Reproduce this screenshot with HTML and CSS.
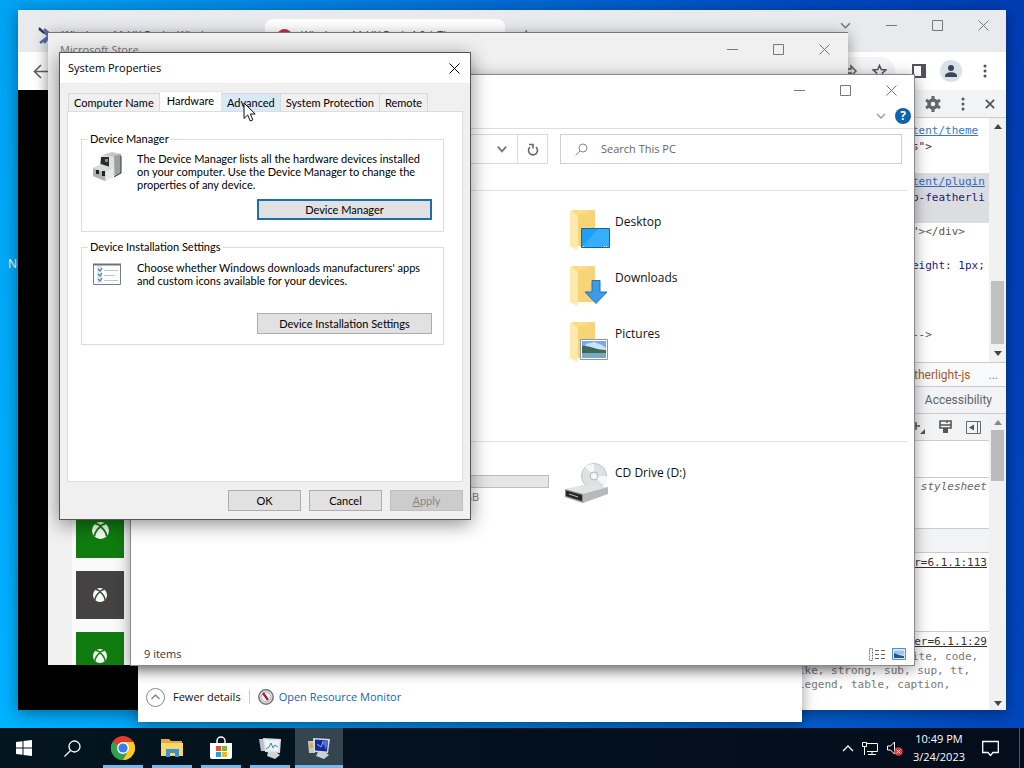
FILE: index.html
```html
<!DOCTYPE html>
<html lang="en">
<head>
<meta charset="utf-8">
<title>Desktop</title>
<link rel="stylesheet" href="styles.css">
</head>
<body>
<svg class="defs" aria-hidden="true">
  <symbol id="min" viewBox="0 0 11 11"><path d="M0 5.5h11" stroke="currentColor"/></symbol>
  <symbol id="max" viewBox="0 0 11 11"><path d="M.5.5h10v10H.5z" fill="none" stroke="currentColor"/></symbol>
  <symbol id="close" viewBox="0 0 11 11"><path d="M.5.5l10 10M10.5.5l-10 10" stroke="currentColor"/></symbol>
  <symbol id="down" viewBox="0 0 10 10"><path d="M1 3l4 4 4-4" fill="none" stroke="currentColor" stroke-width="1.4"/></symbol>
  <symbol id="dots" viewBox="0 0 4 14"><g fill="currentColor"><circle cx="2" cy="2" r="1.5"/><circle cx="2" cy="7" r="1.5"/><circle cx="2" cy="12" r="1.5"/></g></symbol>
  <symbol id="xbox" viewBox="0 0 16 16"><circle cx="8" cy="8" r="8" fill="#f4fff4"/><path d="M3 1.8C5 1.5 6.500 2.600 8 3.700 9.500 2.600 11 1.500 13 1.800M8 4.500C5 6.500 2.800 9.500 2.200 13.500M8 4.500c3 2 5.200 5 5.800 9" fill="none" stroke="var(--tile)" stroke-width="1.700"/></symbol>
  <symbol id="folder" viewBox="0 0 40 42">
    <path d="M2 1h23v36H7z" fill="#fbdb85"/><path d="M8 6l17-5v36H8z" fill="#f9d477"/><path d="M0 1l8 6v30l-1 4-7-4z" fill="#fee9ad"/>
  </symbol>
</svg>
<main class="desktop">
  <span class="shortcut">New</span>

  <section class="window chrome" aria-label="Browser">
    <header class="tabstrip">
      <svg class="tools" viewBox="0 0 14 18"><path d="M1 2l10 7L2 16M6 2l7 6-7 8" fill="none" stroke="#5470a8" stroke-width="2.500"/><path d="M1 1l5 5" stroke="#334" stroke-width="2"/></svg>
      <span class="tab">Windows 11 UX Pack - Windows</span>
      <span class="tab current"><i class="dot"></i>Windows 11 UX Pack 4.0 | The</span>
      <span class="plus">+</span>
      <div class="controls">
        <button aria-label="Search tabs"><svg><use href="#down"/></svg></button>
        <button aria-label="Minimize"><svg><use href="#min"/></svg></button>
        <button aria-label="Maximize"><svg><use href="#max"/></svg></button>
        <button aria-label="Close"><svg><use href="#close"/></svg></button>
      </div>
    </header>
    <div class="navbar">
      <button aria-label="Back"><svg width="15" height="15" viewBox="0 0 15 15"><path d="M15 7.500H2M8 1L1.500 7.500 8 14" fill="none" stroke="#5f6368" stroke-width="1.700"/></svg></button>
      <div class="omnibox">
        <svg width="14" height="14" viewBox="0 0 14 14"><path d="M1 5h6V2l5 5-5 5V9H1" fill="none" stroke="#5f6368" stroke-width="1.500"/></svg>
        <svg width="15" height="15" viewBox="0 0 15 15"><path d="M7.500 1.500l1.800 4.100 4.500.4-3.400 3 1 4.400-3.900-2.300-3.900 2.300 1-4.400-3.400-3 4.500-.4z" fill="none" stroke="#50545a" stroke-width="1.500"/></svg>
      </div>
      <button aria-label="Side panel"><svg width="14" height="14" viewBox="0 0 14 14"><path d="M1 1h12v12H1z" fill="none" stroke="#50545a" stroke-width="2"/><path d="M9 1h4v12H9z" fill="#50545a"/></svg></button>
      <button aria-label="Profile"><svg width="22" height="22" viewBox="0 0 22 22"><circle cx="11" cy="11" r="11" fill="#dbe1ea"/><circle cx="11" cy="8" r="3" fill="#3c4656"/><path d="M5 16c0-5 12-5 12 0v1H5z" fill="#3c4656"/></svg></button>
      <button aria-label="Menu"><svg width="4" height="14"><use href="#dots"/></svg></button>
    </div>
    <div class="viewport">
      <div class="page"></div>
      <aside class="devtools">
        <div class="dt-bar">
          <svg width="16" height="16" viewBox="0 0 16 16"><circle cx="8" cy="8" r="4" fill="none" stroke="#666" stroke-width="3.500"/><path d="M8 0v3M8 13v3M1 4l3 2M12 10l3 2M15 4l-3 2M4 10l-3 2" stroke="#666" stroke-width="3"/></svg>
          <svg width="4" height="14"><use href="#dots"/></svg>
          <svg width="10" height="10" viewBox="0 0 11 11"><path d="M1 1l9 9M10 1l-9 9" stroke="#555" stroke-width="2"/></svg>
        </div>
        <div class="dt-pane">
          <div class="code">
            <div class="chunk"><a href="#">tent/theme</a><br>s"&gt;</div>
            <div class="chunk picked"><a href="#">tent/plugin</a><br><b>p-featherli</b></div>
            <div class="chunk dim">"&gt;&lt;/div&gt;</div>
            <div class="chunk"><b>eight: 1px;</b></div>
            <div class="chunk last dim">--&gt;</div>
          </div>
          <div class="scroll low"><i class="up"></i><i class="thumb"></i><i class="dn"></i></div>
        </div>
        <div class="crumbs"><span>therlight-js</span><span class="more">...</span></div>
        <div class="dt-tabs">Accessibility</div>
        <div class="dt-pane">
          <div class="rules">
            <div class="rule-bar">
              <svg width="13" height="14" viewBox="0 0 13 14"><path d="M0 6h8M4 2v8" stroke="#555" stroke-width="1.500"/><path d="M13 9v5H8z" fill="#555"/></svg>
              <svg width="13" height="14" viewBox="0 0 13 14"><path d="M1 1h11v7H1zM1 5h11M8 1v2" fill="none" stroke="#555" stroke-width="1.600"/><path d="M4 8h5v5H4z" fill="#555"/></svg>
              <svg width="15" height="13" viewBox="0 0 15 13"><path d="M.5.5h14v12H.5zM11.500.5v12" fill="none" stroke="#666"/><path d="M8 3.500v6l-5-3z" fill="#555"/></svg>
            </div>
            <div class="rule blank"></div>
            <div class="rule sheet"><em>stylesheet</em></div>
            <div class="rule grey"></div>
            <div class="rule src">r=6.1.1:113</div>
            <div class="rule end"><div class="src2">er=6.1.1:29</div><div class="r1">ite, code,</div><div>ike, strong, sub, sup, tt,</div><div>legend, table, caption,</div></div>
          </div>
          <div class="scroll high"><i class="up pale"></i><i class="thumb"></i><i class="dn"></i></div>
        </div>
      </aside>
    </div>
  </section>

  <section class="window monitor" aria-label="Task Manager">
    <footer>
      <svg width="19" height="19" viewBox="0 0 19 19"><circle cx="9.500" cy="9.500" r="9" fill="#fff" stroke="#888"/><path d="M5.500 11l4-4 4 4" fill="none" stroke="#888" stroke-width="1.500"/></svg>
      <span>Fewer details</span><i class="bar"></i>
      <svg width="16" height="16" viewBox="0 0 16 16"><circle cx="8" cy="8" r="7.200" fill="#eef3f1" stroke="#77736f" stroke-width="1.500"/><circle cx="8" cy="8" r="5" fill="none" stroke="#9ab"/><path d="M5 4l5 7" stroke="#b3142f" stroke-width="2.200"/></svg>
      <a href="#">Open Resource Monitor</a>
    </footer>
  </section>

  <section class="window store" aria-label="Microsoft Store">
    <header class="titlebar"><span>Microsoft Store</span>
      <div class="controls">
        <button aria-label="Minimize"><svg><use href="#min"/></svg></button>
        <button aria-label="Maximize"><svg><use href="#max"/></svg></button>
        <button aria-label="Close"><svg><use href="#close"/></svg></button>
      </div>
    </header>
    <div class="tiles">
      <i class="tile"></i><i class="tile"></i><i class="tile"></i><i class="tile"></i><i class="tile"></i><i class="tile"></i><i class="tile"></i>
      <i class="tile raised"><svg width="17" height="17"><use href="#xbox"/></svg></i>
      <i class="tile dark"><svg width="14" height="14"><use href="#xbox"/></svg></i>
      <i class="tile"><svg width="14" height="14"><use href="#xbox"/></svg></i>
    </div>
  </section>

  <section class="window explorer" aria-label="This PC">
    <header class="titlebar">
      <div class="controls">
        <button aria-label="Minimize"><svg><use href="#min"/></svg></button>
        <button aria-label="Maximize"><svg><use href="#max"/></svg></button>
        <button aria-label="Close"><svg><use href="#close"/></svg></button>
      </div>
    </header>
    <div class="ribbon"><svg width="10" height="10"><use href="#down"/></svg><button class="help" aria-label="Help">?</button></div>
    <div class="address">
      <div class="path"><button aria-label="Previous locations"><svg width="12" height="12" viewBox="0 0 10 10"><path d="M1.500 3l3.500 4 3.500-4" fill="none" stroke="#777" stroke-width="1.500"/></svg></button><button aria-label="Refresh"><svg width="12" height="13" viewBox="0 0 12 13"><path d="M3 4a4.500 4.500 0 1 0 6 0M2 1.500h4v4" fill="none" stroke="#666" stroke-width="1.600"/></svg></button></div>
      <label class="search"><svg width="13" height="13" viewBox="0 0 13 13"><circle cx="8" cy="5" r="4" fill="none" stroke="#888"/><path d="M5 8l-4.500 4.500" stroke="#888"/></svg><input type="text" placeholder="Search This PC" aria-label="Search This PC"></label>
    </div>
    <div class="files">
      <ul class="group">
        <li><svg width="40" height="42" viewBox="0 0 40 42"><use href="#folder"/><path d="M11.500 19.500h28v19h-28z" fill="#1ea0f5" stroke="#15659f"/><path d="M12 38L28 20h11v18z" fill="#36aefa"/><path d="M13 37.500h2M34 37.500h4" stroke="#fff" stroke-dasharray="1"/></svg>Desktop</li>
        <li><svg width="40" height="42" viewBox="0 0 40 42"><use href="#folder"/><path d="M22 15.500h8V27h7L26 38.500 15 27h7z" fill="#3b9be8" stroke="#2273b5"/></svg>Downloads</li>
        <li><svg width="40" height="42" viewBox="0 0 40 42"><use href="#folder"/><path d="M10.500 18.500h27v20h-27z" fill="#fff" stroke="#8996a5"/><path d="M12 20h24v9H12z" fill="#75aaf0"/><path d="M16 23l8-2 8 3 4 3v3H12z" fill="#cce3ff"/><path d="M12 25c7-1 12 4 24 4v4H12z" fill="#3e6957"/><path d="M12 32h24v5H12z" fill="#7aa8bf"/></svg>Pictures</li>
      </ul>
      <div class="drives">
        <div class="disk"><i class="meter"></i><span>GB</span></div>
        <div class="cd"><svg width="43" height="41" viewBox="0 0 43 41"><circle cx="29" cy="13" r="12.500" fill="#dce1e1" stroke="#bfc5c5"/><path d="M29 13L20 4a13 13 0 0 1 9-3zM29 13l9 9a13 13 0 0 0 4-9z" fill="#f5f8f8"/><circle cx="29" cy="13" r="4" fill="#eef1f1" stroke="#b4baba"/><circle cx="29" cy="13" r="1.500" fill="#fff"/><path d="M0 26l18-4 25 2-24 8z" fill="#e3e4e4"/><path d="M18 31l25-7v7l-25 9z" fill="#b7babb"/><path d="M0 26l18 5v9L0 34z" fill="#8e9293"/><path d="M1 27.500l16 4.500v6L1 33z" fill="#222628"/><path d="M4 31l9 3" stroke="#bbb"/></svg><span>CD Drive (D:)</span></div>
      </div>
    </div>
    <footer class="status"><span>9 items</span>
      <div><svg width="18" height="13" viewBox="0 0 18 13"><path d="M1.500.5h3v12h-3z" fill="none" stroke="#777" stroke-dasharray="2 1"/><path d="M7 2.500h4M13 2.500h4M7 6.500h4M13 6.500h4M7 10.500h4M13 10.500h4" stroke="#666"/></svg>
      <svg width="14" height="12" viewBox="0 0 14 12"><path d="M.5.5h13v11H.5z" fill="#dbeeff" stroke="#4d91c4"/><path d="M2 2.500h10v4H2z" fill="#9bc5f0"/><path d="M2 5l5 2 5 1v2H2z" fill="#27548c"/></svg></div>
    </footer>
  </section>

  <section class="window dialog" role="dialog" aria-label="System Properties">
    <header class="titlebar"><span>System Properties</span><button class="x" aria-label="Close"><svg width="11" height="11"><use href="#close"/></svg></button></header>
    <div class="sheet-body">
      <div class="ptabs" role="tablist">
        <button role="tab">Computer Name</button><button role="tab" class="on" aria-selected="true">Hardware</button><button role="tab" class="hover">Advanced</button><button role="tab">System Protection</button><button role="tab">Remote</button>
      </div>
      <div class="panel">
        <fieldset>
          <legend>Device Manager</legend>
          <div class="info">
            <svg width="30" height="30" viewBox="0 0 30 30"><path d="M10 3l10-3 9 2v19l-6 3-13-5z" fill="#c5c8ca"/><path d="M22 4l7-2v19l-6 3z" fill="#9b9fa2"/><path d="M10 3l12 2v17H10z" fill="#dee0e1"/><path d="M9 5h8v12H8z" fill="#272c2c"/><path d="M13 7h3v3h-3z" fill="#7a9485"/><path d="M1 16l8-4 12 4v9l-8 4-12-5z" fill="#d8dadc"/><path d="M1 16l12 5v8L1 24z" fill="#aeb2b5"/><path d="M4 18h3v4H4zM10 19h3v5h-3z" fill="#222"/><path d="M14 20l7-4v9l-7 4z" fill="#e8e9ea"/><path d="M22 25l7-4v-17" fill="none" stroke="#333"/></svg>
            <p>The Device Manager lists all the hardware devices installed on your computer. Use the Device Manager to change the properties of any device.</p>
          </div>
          <button class="btn wide focus">Device Manager</button>
        </fieldset>
        <fieldset class="second">
          <legend>Device Installation Settings</legend>
          <div class="info">
            <svg width="30" height="26" viewBox="0 0 30 26"><path d="M1.500 3.500h27v20h-27z" fill="#fcfdfd" stroke="#777c85"/><path d="M1 3.500h28" stroke="#6d727a" stroke-width="2"/><path d="M5 5h5v17H5z" fill="#dcebf3"/><path d="M6 8l2 2 2-3M6 13l2 2 2-3M6 18l2 2 2-3" fill="none" stroke="#52849c" stroke-width="1.300"/><path d="M12 9.500h14M12 14.500h11M12 19.500h14" stroke="#b9c4cb"/></svg>
            <p>Choose whether Windows downloads manufacturers' apps and custom icons available for your devices.</p>
          </div>
          <button class="btn wide">Device Installation Settings</button>
        </fieldset>
      </div>
      <div class="actions"><button class="btn">OK</button><button class="btn">Cancel</button><button class="btn" disabled><u>A</u>pply</button></div>
    </div>
  </section>

  <svg class="cursor" width="13" height="20" viewBox="0 0 13 20"><path d="M1 1v15.500l3.700-3.500 2.500 6 2.600-1.100L7.400 12h4.800z" fill="#fff" stroke="#111"/></svg>
</main>

<nav class="taskbar">
  <button aria-label="Start"><svg width="16" height="16" viewBox="0 0 16 16"><path d="M0 2l6.500-.8v6.300H0zM7.500 1L16 0v7.500H7.500zM0 8.500h6.500v6.300L0 14zM7.500 8.500H16V16l-8.500-1z" fill="#fff"/></svg></button>
  <button aria-label="Search"><svg width="17" height="17" viewBox="0 0 17 17"><circle cx="10.500" cy="6.500" r="5.500" fill="none" stroke="#fff" stroke-width="1.300"/><path d="M6.500 10.500l-6 6" stroke="#fff" stroke-width="1.300"/></svg></button>
  <div class="apps">
    <button class="run" aria-label="Chrome"><svg width="24" height="24" viewBox="0 0 24 24"><circle cx="12" cy="12" r="12" fill="#e33b2e"/><path d="M1.600 6A12 12 0 0 0 12 24l5.200-9z" fill="#2fa24c"/><path d="M12 24A12 12 0 0 0 22.400 6H12l5.200 9z" fill="#fdcc20"/><circle cx="12" cy="12" r="6" fill="#fff"/><circle cx="12" cy="12" r="4.600" fill="#3b7de8"/></svg></button>
    <button class="run" aria-label="File Explorer"><svg width="22" height="20" viewBox="0 0 22 20"><path d="M0 1h8l2 2h11v5H0z" fill="#e6a93a"/><path d="M0 5h22v13H0z" fill="#fad66f"/><path d="M5 11h13v8h-4v-4H9v4H5z" fill="#3c93ca"/></svg></button>
    <button class="run" aria-label="Store"><svg width="24" height="24" viewBox="0 0 24 24"><path d="M8 9V5a4 4 0 0 1 8 0v4" fill="none" stroke="#fff" stroke-width="1.500"/><path d="M1 7h22v14q0 2-2 2H3q-2 0-2-2z" fill="#fff"/><path d="M7 10h5v5H7z" fill="#e6502d"/><path d="M13 10h5v5h-5z" fill="#7db82e"/><path d="M7 16h5v5H7z" fill="#2a9fe0"/><path d="M13 16h5v5h-5z" fill="#f7b91c"/></svg></button>
    <button class="run" aria-label="Task Manager"><svg width="24" height="22" viewBox="0 0 24 22"><path d="M1 2h8v12H3z" fill="#b9c0c4"/><path d="M5 1l18 1-1 14-15-1z" fill="#dde2e5"/><path d="M7 3l14 1-1 10-12-1z" fill="#edf5fa"/><path d="M8 12l3-2 2-4 2 5 2-3 3 2" fill="none" stroke="#3487b4"/><path d="M10 15h8l4 3-5 4-8-3z" fill="#cfd4d6"/></svg></button>
    <button class="run active" aria-label="System Properties"><svg width="24" height="22" viewBox="0 0 24 22"><path d="M1 4h7v12H2z" fill="#c5cacb"/><path d="M3 6h3v5H3z" fill="#c8b34e"/><path d="M6 1l17 1-2 14-14-1z" fill="#d5dbe0"/><path d="M8 2.500l13 1-1 11-12-1z" fill="#16289b"/><path d="M15 4l6 0-2 9z" fill="#4b72da"/><path d="M10 7l4 3 2-5" fill="none" stroke="#9db3f2"/><path d="M11 15h7l4 3-5 4-8-3z" fill="#ccd1d3"/></svg></button>
  </div>
  <div class="tray">
    <svg width="12" height="8" viewBox="0 0 12 8"><path d="M1 7l5-5 5 5" fill="none" stroke="#fff" stroke-width="1.300"/></svg>
    <svg width="17" height="15" viewBox="0 0 17 15"><path d="M4.500 2.500h11v8H5M10 11v3M6 13.500h8M2.500 6v8M.5 1.500h4v4h-4z" fill="none" stroke="#fff"/></svg>
    <svg width="16" height="15" viewBox="0 0 16 15"><path d="M.5 5h3l4-4v12l-4-4h-3z" fill="none" stroke="#fff"/><circle cx="11.500" cy="10.500" r="4.300" fill="#d33c40"/><path d="M9.700 8.700l3.600 3.600M13.300 8.700l-3.600 3.600" stroke="#fff"/></svg>
    <time>10:49 PM<br>3/24/2023</time>
    <svg class="note" width="17" height="17" viewBox="0 0 17 17"><path d="M.7 1.500h15.600v11H11L8.500 15.500 6 12.500H.7z" fill="none" stroke="#fff" stroke-width="1.300"/></svg>
    <i class="peek"></i>
  </div>
</nav>
</body>
</html>
```
FILE: styles.css
```css
* { box-sizing: border-box; }
body {
  margin: 0;
  height: 100vh;
  display: flex;
  flex-direction: column;
  overflow: hidden;
  font: 11px/16px "Open Sans", "Noto Sans", sans-serif;
  color: #111;
}
button { margin: 0; padding: 0; border: 0; background: none; font: inherit; color: inherit; }
svg { display: block; flex: none; }
ul, p { margin: 0; padding: 0; list-style: none; }
.defs { position: absolute; width: 0; height: 0; }

.desktop {
  flex: 1;
  position: relative;
  overflow: hidden;
  background: linear-gradient(76deg, #00b2ff 0%, #00a0f2 18%, #0078dc 48%, #0048be 82%, #003cb4 100%);
}
.shortcut { position: absolute; left: 8px; top: 256px; font-size: 12px; color: #fff; }
.window {
  position: absolute;
  display: flex;
  flex-direction: column;
  overflow: hidden;
  background: #fff;
  box-shadow: 0 3px 14px rgba(0, 0, 0, .4);
}
.controls { display: flex; margin-left: auto; color: #777; }
.controls button { width: 46px; height: 30px; display: grid; place-items: center; }
.controls svg { width: 11px; height: 11px; }
.titlebar { display: flex; flex: none; }

/* Browser */
.chrome { left: 18px; top: 10px; width: 988px; height: 700px; }
.tabstrip { display: flex; flex: none; height: 42px; padding-left: 20px; background: #e8eaed; color: #444; }
.tools { width: 14px; height: 18px; margin-top: 17px; }
.tab { width: 209px; height: 31px; padding: 19px 0 0 10px; font-size: 11px; line-height: 12px; white-space: nowrap; overflow: hidden; }
.tab.current { display: flex; gap: 9px; width: 240px; height: auto; margin: 9px 0 0 4px; padding: 10px 12px 0; border-radius: 8px 8px 0 0; background: #fff; }
.dot { flex: none; width: 15px; height: 15px; border-radius: 50%; background: #c4314b; }
.plus { margin: 12px 0 0 16px; font-size: 18px; line-height: 24px; }
.navbar { display: flex; align-items: center; flex: none; height: 38px; padding: 0 19px 0 15px; color: #50545a; }
.navbar button + button { margin-left: 14px; }
.navbar button:last-child { margin-left: 21px; }
.omnibox { display: flex; align-items: center; justify-content: flex-end; gap: 14px; flex: 1; height: 28px; margin: 0 17px 0 60px; padding-right: 8px; border-radius: 14px; background: #f1f3f4; }
.viewport { display: flex; flex: 1; min-height: 0; }
.page { flex: 1; background: #000; }
.devtools { display: flex; flex-direction: column; width: 210px; background: #f1f3f4; font: 11px/16px "DejaVu Sans Mono", monospace; color: #333; }
.dt-bar { display: flex; align-items: center; justify-content: flex-end; gap: 20px; flex: none; height: 28px; padding-right: 11px; border-bottom: 1px solid #ccc; color: #555; }
.dt-pane { display: flex; }
.code { flex: 1; height: 244px; padding-top: 5px; background: #fff; overflow: hidden; white-space: nowrap; }
.chunk { margin-bottom: 18px; padding-left: 116px; }
.chunk b { font-weight: normal; color: #1a1a80; }
.chunk a { color: #3b78c8; }
.chunk.dim { color: #555; }
.picked { height: 50px; margin-bottom: 1px; background: #dcdde0; padding-top: 1px; }
.picked a { color: #2a6acb; }
.last { margin-top: 53px; }
.scroll { display: flex; flex-direction: column; align-items: center; flex: none; width: 17px; padding: 6px 2px; background: #f1f1f1; }
.scroll .up { border: 4px solid transparent; border-top: 0; border-bottom: 5px solid #444; }
.scroll .pale { border-bottom-color: #888; }
.scroll .dn { border: 4px solid transparent; border-bottom: 0; border-top: 5px solid #444; margin-top: auto; }
.thumb { width: 13px; background: #c1c1c1; }
.low .thumb { height: 63px; margin-top: 152px; }
.high .thumb { height: 51px; margin-top: 5px; background: #bbb; }
.crumbs, .dt-tabs { display: flex; flex: none; font: 12px/24px Roboto, sans-serif; border-top: 1px solid #ccc; }
.crumbs { justify-content: flex-end; gap: 18px; height: 24px; padding-right: 8px; color: #a05a2c; background: #f8f9fa; }
.crumbs .more { color: #888; }
.dt-tabs { justify-content: flex-end; height: 28px; padding: 1px 14px 0 0; border-bottom: 1px solid #ccc; color: #5f6368; }
.rules { flex: 1; background: #fff; white-space: nowrap; }
.rule { border-top: 1px solid #ccc; }
.rule-bar { display: flex; justify-content: flex-end; align-items: center; gap: 14px; height: 26px; padding-right: 8px; background: #f1f3f4; }
.blank { height: 37px; }
.sheet { height: 51px; padding: 1px 2px 0; text-align: right; color: #666; }
.grey { height: 24px; background: #f1f3f4; }
.src, .src2 { padding: 2px 2px 0; text-align: right; text-decoration: underline; }
.src { height: 79px; }
.end { height: 81px; line-height: 14px; padding-left: 2px; color: #777; }
.src2 { color: #333; line-height: 16px; }
.r1 { padding-left: 114px; }

/* Task Manager */
.monitor { left: 138px; top: 300px; width: 664px; height: 422px; justify-content: flex-end; }
.monitor footer { display: flex; align-items: center; gap: 8px; height: 50px; padding-left: 8px; }
.monitor a { margin-left: -3px; color: #1a5fb0; text-decoration: none; }
.bar { width: 1px; height: 14px; background: #ccc; }

/* Store */
.store { left: 48px; top: 32px; width: 800px; height: 633px; background: #f0f0f0; border-top: 1px solid #777; }
.store .titlebar { height: 41px; padding: 0 1px 0 12px; line-height: 34px; color: #777; }
.store .controls button { height: 32px; }
.tiles { display: grid; gap: 13px; width: 82px; margin-left: 24px; padding: 9px 4px 0; background: #fafafa; }
.tile { --tile: #107c10; display: grid; place-items: center; width: 48px; height: 48px; background: var(--tile); }
.tile.dark { --tile: #444242; }
.tile.raised { padding-bottom: 8px; }

/* Explorer */
.explorer { left: 130px; top: 74px; width: 785px; height: 592px; border: 1px solid #8a8a8a; }
.ribbon { display: flex; justify-content: flex-end; align-items: center; gap: 9px; flex: none; height: 24px; padding: 0 3px 2px 0; border-bottom: 1px solid #ddd; color: #999; }
.help { width: 16px; height: 16px; border-radius: 50%; background: #0f62ae; color: #fff; font-size: 12px; font-weight: bold; line-height: 16px; }
.address { display: flex; gap: 12px; flex: none; height: 62px; margin-right: 6px; padding: 5px 6px 26px 0; border-bottom: 1px solid #e2e2e2; }
.path { display: flex; justify-content: flex-end; flex: 1; border: 1px solid #d9d9d9; }
.path button { width: 30px; display: grid; place-items: center; }
.path button + button { border-left: 1px solid #d9d9d9; }
.search { display: flex; align-items: center; gap: 13px; width: 342px; padding: 0 14px; border: 1px solid #d0d0d0; }
.search input { flex: 1; min-width: 0; border: 0; padding: 0; font: inherit; outline: 0; background: none; }
.search input::placeholder { color: #666; opacity: 1; }
.files { flex: 1; display: flex; flex-direction: column; font-size: 12px; }
.group { height: 251px; margin-right: 6px; padding: 18px 0 0 439px; border-bottom: 1px solid #e2e2e2; }
.group li { display: flex; gap: 5px; height: 56px; line-height: 26px; }
.drives { display: flex; gap: 16px; padding-top: 21px; }
.disk { width: 418px; padding-top: 12px; font-size: 11px; color: #777; }
.meter { display: block; height: 13px; margin-left: 220px; border: 1px solid #bcbcbc; background: #e6e6e6; }
.disk span { display: block; width: 348px; text-align: right; line-height: 18px; }
.cd { display: flex; gap: 7px; line-height: 20px; }
.status { display: flex; justify-content: space-between; align-items: center; height: 22px; padding: 0 8px 0 13px; color: #333; }
.status div { display: flex; align-items: center; gap: 6px; }

/* System Properties */
.dialog { left: 59px; top: 52px; width: 412px; height: 468px; border: 1px solid #555; background: #f0f0f0; box-shadow: 0 4px 18px rgba(0, 0, 0, .45); }
.dialog .titlebar { justify-content: space-between; align-items: center; height: 30px; padding: 0 10px 0 8px; background: #fff; color: #000; }
.sheet-body { display: flex; flex-direction: column; flex: 1; padding: 8px 7px; font: 11px/13px Lato, "Liberation Sans", sans-serif; color: #000; }
.ptabs { display: flex; align-items: flex-end; flex: none; height: 20px; padding-left: 1px; }
.ptabs button { height: 18px; padding: 0 5px; border: 1px solid #d9d9d9; border-bottom: 0; border-left-width: 0; white-space: nowrap; }
.ptabs button:first-child { border-left-width: 1px; }
.ptabs .on { height: 20px; padding: 0 7px 2px; background: #fff; border-color: #e4e4e4; }
.ptabs .hover { background: #d8eaf9; }
.panel { display: flex; flex-direction: column; gap: 7px; flex: 1; padding: 19px 18px 0 13px; border: 1px solid #dcdcdc; background: #fff; }
fieldset { min-width: 0; height: 101px; margin: 0; padding: 5px 11px 0 10px; border: 1px solid #dcdcdc; }
legend { margin-left: -4px; padding: 0 2px; line-height: 16px; }
.info { display: flex; gap: 15px; height: 47px; }
.info p { max-width: 284px; }
.second { height: 106px; padding-top: 6px; }
.second .info { height: 52px; }
.btn { display: block; width: 73px; height: 21px; border: 1px solid #adadad; background: #e1e1e1; text-align: center; }
.btn.wide { width: 175px; margin-left: auto; }
.btn.focus { border: 2px solid #1a70ad; }
.btn:disabled { border-color: #bfbfbf; background: #ccc; color: #888; }
.actions { display: flex; justify-content: flex-end; gap: 8px; flex: none; padding-top: 8px; }

.cursor { position: absolute; left: 243px; top: 102px; }

/* Taskbar */
.taskbar { display: flex; flex: none; height: 40px; background: linear-gradient(90deg, #03151f, #030d1c); color: #fff; }
.taskbar button { width: 48px; display: grid; place-items: center; }
.apps { display: flex; gap: 1px; margin-left: 3px; }
.taskbar .run { background: linear-gradient(#76b9ed, #76b9ed) center bottom / 40px 3px no-repeat; }
.taskbar .active { background-color: #34454f; background-size: 48px 3px; }
.tray { display: flex; align-items: center; gap: 8px; margin-left: auto; }
.tray time { text-align: center; line-height: 18px; margin-left: 2px; }
.note { margin-left: 9px; }
.peek { width: 1px; height: 40px; margin: 0 4px 0 12px; background: #4b5560; }
```
